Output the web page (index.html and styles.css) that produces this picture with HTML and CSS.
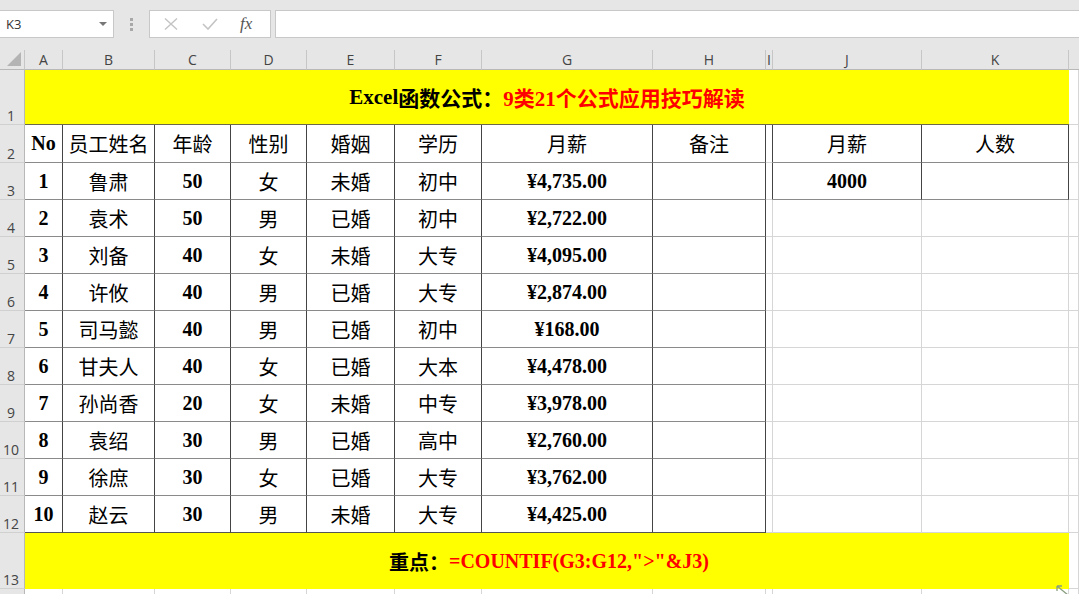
FILE: index.html
```html
<!DOCTYPE html>
<html lang="zh">
<head>
<meta charset="utf-8">
<title>Excel</title>
<link rel="stylesheet" href="styles.css">
</head>
<body>
<div class="app">
  <div class="fbar">
    <div class="namebox"><span class="nb-text">K3</span><span class="nb-arrow"></span></div>
    <div class="grip"><i></i><i></i><i></i></div>
    <div class="fxbox">
      <svg class="ico" width="14" height="12" viewBox="0 0 14 12"><path d="M1 0.5 L13 11.5 M13 0.5 L1 11.5" stroke="#c4c4c4" stroke-width="1.4" fill="none"/></svg>
      <svg class="ico" width="16" height="12" viewBox="0 0 16 12"><path d="M1 6 L6 11 L15 1" stroke="#c4c4c4" stroke-width="1.6" fill="none"/></svg>
      <span class="fx">fx</span>
    </div>
    <div class="finput"></div>
  </div>
  <div class="sheet">
    <div class="corner"><svg width="14" height="14" viewBox="0 0 14 14"><path d="M14 0 L14 14 L0 14 Z" fill="#b4b4b4"/></svg></div>
    <div class="ch">A</div><div class="ch">B</div><div class="ch">C</div><div class="ch">D</div><div class="ch">E</div><div class="ch">F</div><div class="ch">G</div><div class="ch">H</div><div class="ch">I</div><div class="ch">J</div><div class="ch">K</div><div class="ch ch-last"></div>

    <div class="rh">1</div>
    <div class="banner"><span class="serif">Excel</span><span class="cjkb">函数公式：</span><span class="red"><span class="serif">9</span><span class="cjkb">类</span><span class="serif">21</span><span class="cjkb">个公式应用技巧解读</span></span></div>
    <div class="c bb"></div>

    <div class="rh">2</div>
    <div class="c t num">No</div><div class="c t cjk">员工姓名</div><div class="c t cjk">年龄</div><div class="c t cjk">性别</div><div class="c t cjk">婚姻</div><div class="c t cjk">学历</div><div class="c t cjk">月薪</div><div class="c t cjk">备注</div><div class="c ir"></div><div class="c t cjk">月薪</div><div class="c t cjk">人数</div><div class="c"></div>

    <div class="rh">3</div>
    <div class="c t num">1</div><div class="c t cjk">鲁肃</div><div class="c t num">50</div><div class="c t cjk">女</div><div class="c t cjk">未婚</div><div class="c t cjk">初中</div><div class="c t num">¥4,735.00</div><div class="c t"></div><div class="c ir"></div><div class="c t num">4000</div><div class="c t"></div><div class="c"></div>

    <div class="rh">4</div>
    <div class="c t num">2</div><div class="c t cjk">袁术</div><div class="c t num">50</div><div class="c t cjk">男</div><div class="c t cjk">已婚</div><div class="c t cjk">初中</div><div class="c t num">¥2,722.00</div><div class="c t"></div><div class="c"></div><div class="c"></div><div class="c"></div><div class="c"></div>

    <div class="rh">5</div>
    <div class="c t num">3</div><div class="c t cjk">刘备</div><div class="c t num">40</div><div class="c t cjk">女</div><div class="c t cjk">未婚</div><div class="c t cjk">大专</div><div class="c t num">¥4,095.00</div><div class="c t"></div><div class="c"></div><div class="c"></div><div class="c"></div><div class="c"></div>

    <div class="rh">6</div>
    <div class="c t num">4</div><div class="c t cjk">许攸</div><div class="c t num">40</div><div class="c t cjk">男</div><div class="c t cjk">已婚</div><div class="c t cjk">大专</div><div class="c t num">¥2,874.00</div><div class="c t"></div><div class="c"></div><div class="c"></div><div class="c"></div><div class="c"></div>

    <div class="rh">7</div>
    <div class="c t num">5</div><div class="c t cjk">司马懿</div><div class="c t num">40</div><div class="c t cjk">男</div><div class="c t cjk">已婚</div><div class="c t cjk">初中</div><div class="c t num">¥168.00</div><div class="c t"></div><div class="c"></div><div class="c"></div><div class="c"></div><div class="c"></div>

    <div class="rh">8</div>
    <div class="c t num">6</div><div class="c t cjk">甘夫人</div><div class="c t num">40</div><div class="c t cjk">女</div><div class="c t cjk">已婚</div><div class="c t cjk">大本</div><div class="c t num">¥4,478.00</div><div class="c t"></div><div class="c"></div><div class="c"></div><div class="c"></div><div class="c"></div>

    <div class="rh">9</div>
    <div class="c t num">7</div><div class="c t cjk">孙尚香</div><div class="c t num">20</div><div class="c t cjk">女</div><div class="c t cjk">未婚</div><div class="c t cjk">中专</div><div class="c t num">¥3,978.00</div><div class="c t"></div><div class="c"></div><div class="c"></div><div class="c"></div><div class="c"></div>

    <div class="rh">10</div>
    <div class="c t num">8</div><div class="c t cjk">袁绍</div><div class="c t num">30</div><div class="c t cjk">男</div><div class="c t cjk">已婚</div><div class="c t cjk">高中</div><div class="c t num">¥2,760.00</div><div class="c t"></div><div class="c"></div><div class="c"></div><div class="c"></div><div class="c"></div>

    <div class="rh">11</div>
    <div class="c t num">9</div><div class="c t cjk">徐庶</div><div class="c t num">30</div><div class="c t cjk">女</div><div class="c t cjk">已婚</div><div class="c t cjk">大专</div><div class="c t num">¥3,762.00</div><div class="c t"></div><div class="c"></div><div class="c"></div><div class="c"></div><div class="c"></div>

    <div class="rh">12</div>
    <div class="c t tl num">10</div><div class="c t tl cjk">赵云</div><div class="c t tl num">30</div><div class="c t tl cjk">男</div><div class="c t tl cjk">未婚</div><div class="c t tl cjk">大专</div><div class="c t tl num">¥4,425.00</div><div class="c t tl"></div><div class="c"></div><div class="c"></div><div class="c"></div><div class="c"></div>

    <div class="rh">13</div>
    <div class="banner banner2"><span class="cjkb">重点：</span><span class="red serif">=COUNTIF(G3:G12,"&gt;"&amp;J3)</span></div>
    <div class="c"></div>

    <div class="rh"></div>
    <div class="c"></div><div class="c"></div><div class="c"></div><div class="c"></div><div class="c"></div><div class="c"></div><div class="c"></div><div class="c"></div><div class="c"></div><div class="c"></div><div class="c"></div><div class="c"></div>
  </div>
  <svg class="cursor" width="14" height="10" viewBox="0 0 14 10"><path d="M1 1 L12 10 M1 1 L1 6 M1 1 L6 1" stroke="#8aa080" stroke-width="1.3" fill="none"/></svg>
</div>
</body>
</html>
```

FILE: styles.css
```css
* { box-sizing: border-box; }
html, body { margin: 0; padding: 0; }
body {
  width: 1079px;
  height: 594px;
  overflow: hidden;
  background: #ffffff;
  font-family: "Noto Sans", "Noto Sans CJK SC", sans-serif;
}
.app { position: relative; width: 1079px; height: 594px; overflow: hidden; }

.fbar {
  height: 50px;
  background: #e6e6e6;
  display: flex;
  align-items: flex-start;
  padding-top: 10px;
}
.namebox {
  width: 114px;
  height: 28px;
  background: #fff;
  border: 1px solid #c8c8c8;
  border-left: none;
  display: flex;
  align-items: center;
  justify-content: space-between;
  padding: 0 6px 0 6px;
}
.nb-text { font-family: "Open Sans", sans-serif; font-size: 13px; color: #333; }
.nb-arrow {
  width: 0; height: 0;
  border-left: 4px solid transparent;
  border-right: 4px solid transparent;
  border-top: 4px solid #777;
}
.grip {
  width: 35px;
  height: 28px;
  display: flex;
  flex-direction: column;
  align-items: center;
  justify-content: center;
  gap: 2px;
}
.grip i { display: block; width: 3px; height: 3px; background: #a8a8a8; }
.fxbox {
  width: 122px;
  height: 28px;
  background: #fff;
  border: 1px solid #c8c8c8;
  display: flex;
  align-items: center;
  padding-left: 14px;
  gap: 24px;
}
.fx {
  font-family: "Liberation Serif", serif;
  font-style: italic;
  font-size: 17px;
  color: #555;
  margin-left: -2px;
}
.finput {
  flex: 1;
  height: 28px;
  margin-left: 4px;
  background: #fff;
  border: 1px solid #c8c8c8;
  border-right: none;
}

.sheet {
  display: grid;
  grid-template-columns: 25px 38px 92px 76px 76px 88px 87px 171px 113px 7px 149px 147px 1fr;
  grid-template-rows: 20px 55px 38px repeat(10, 37px) 56px 37px;
}
.corner {
  background: #e6e6e6;
  border-right: 1px solid #c6c6c6;
  border-bottom: 1px solid #b8b8b8;
  display: flex;
  align-items: flex-end;
  justify-content: flex-end;
  padding: 0 3px 3px 0;
}
.ch {
  background: #e6e6e6;
  border-right: 1px solid #c6c6c6;
  border-bottom: 1px solid #b8b8b8;
  font-family: "Open Sans", sans-serif;
  font-size: 14px;
  color: #444;
  display: flex;
  align-items: center;
  justify-content: center;
  overflow: hidden;
  line-height: 1;
}
.ch-last { border-right: none; }
.rh {
  background: #e6e6e6;
  border-right: 1px solid #b8b8b8;
  border-bottom: 1px solid #d0d0d0;
  font-family: "Open Sans", sans-serif;
  font-size: 14px;
  color: #444;
  display: flex;
  align-items: flex-end;
  justify-content: center;
  padding-bottom: 1px;
  line-height: 1;
  padding-right: 2px;
}
.c {
  border-right: 1px solid #d6d6d6;
  border-bottom: 1px solid #d6d6d6;
  display: flex;
  align-items: center;
  justify-content: center;
  color: #000;
  white-space: nowrap;
  overflow: hidden;
}
.c.t { border-right: 1px solid #444; border-bottom: 1px solid #8a8a8a; }
.c.tl { border-bottom: 1px solid #555; }
.c.ir { border-right: 1px solid #444; }
.c.bb { border-bottom: 1px solid #d6d6d6; }
.num {
  font-family: "Liberation Serif", serif;
  font-weight: 700;
  font-size: 20px;
}
.cjk {
  font-family: "Noto Sans CJK SC", sans-serif;
  font-weight: 400;
  font-size: 20px;
}
.banner {
  grid-column: 2 / 13;
  background: #ffff00;
  border-bottom: 1px solid #6a6a4a;
  display: flex;
  align-items: center;
  justify-content: center;
  font-size: 21px;
  font-weight: 700;
  color: #000;
  white-space: nowrap;
}
.banner2 { font-size: 20px; border-bottom: none; padding-left: 4px; }
.serif { font-family: "Liberation Serif", serif; font-weight: 700; }
.cjkb { font-family: "Noto Sans CJK SC", sans-serif; font-weight: 700; }
.red { color: #ff0000; }
.cursor { position: absolute; left: 1056px; top: 585px; }
```
